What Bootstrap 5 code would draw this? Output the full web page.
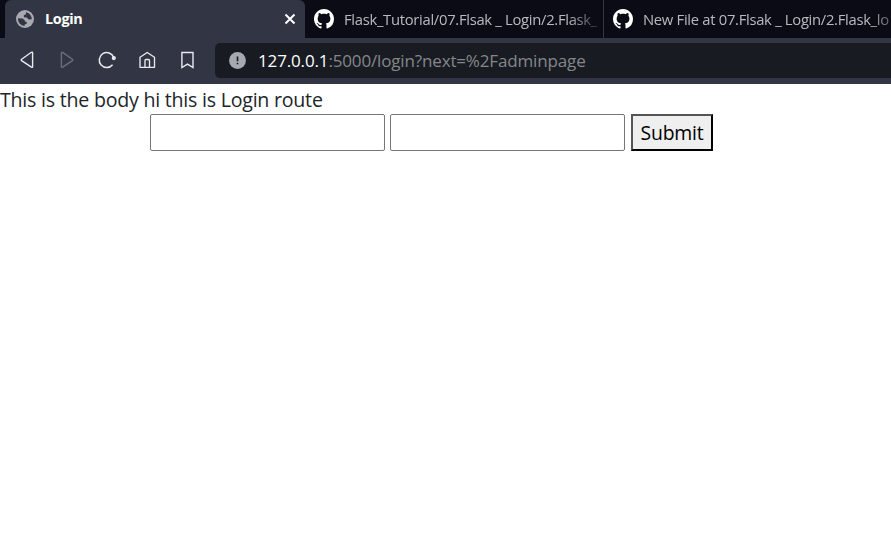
<!DOCTYPE html>
<html lang="en">
<head>
<meta charset="utf-8">
<title>Login</title>
<link href="https://cdn.jsdelivr.net/npm/bootstrap@5.3.0/dist/css/bootstrap.min.css" rel="stylesheet">
<style>
body{font-family:"Open Sans","Noto Sans",sans-serif;background:#fff;overflow:hidden;height:550px}
.tab-strip{height:38px;background:#0b0b16;padding-left:5px}
.tab-item{height:38px;font-size:14.8px;white-space:nowrap;color:#b9b9bd;overflow:hidden}
.tab-current{width:300px;background:#323644;color:#fff;font-weight:700;border-radius:6px 6px 0 0;padding:0 9px 0 11px;font-size:14.4px}
.tab-repo{width:299px;padding-left:9px;border-right:1px solid #35353f}
.tab-last{width:287px;padding-left:9px}
.tab-label{overflow:hidden;line-height:38px;letter-spacing:-.3px}
.tab-name{margin-left:11px}
.fade-a{width:253px;margin-left:10px;-webkit-mask-image:linear-gradient(to right,#000 224px,transparent 262px)}
.fade-b{width:249px;margin-left:10px;-webkit-mask-image:linear-gradient(to right,#000 226px,transparent 264px)}
.toolbar-row{height:46px;background:#323644;padding-left:17px;padding-bottom:2px}
.tool-icon{width:20px;height:20px;margin-right:20px}
.address-field{height:35px;background:#181b22;border-radius:5px 0 0 5px;margin-left:-2px;padding-left:14px;color:#85878a;font-size:17px}
.address-text{margin-left:12px;letter-spacing:-.15px;line-height:35px}
.page-text{font-size:19.6px;line-height:30px;color:#212529;height:30px;padding-top:1px;letter-spacing:-.23px}
.login-form{padding-left:150px}
.text-field{width:235px;height:37px;border:1px solid #767676;border-radius:2px;margin-right:5px;font-size:20px}
.submit-button{width:82px;height:37px;margin-left:1px;padding:1px 0 0;border:2px solid;border-color:#555 #000 #000 #555;background:#efefef;color:#000;font-size:19.4px;line-height:32px;letter-spacing:-.2px}
</style>
<script src="https://cdn.jsdelivr.net/npm/bootstrap@5.3.0/dist/js/bootstrap.bundle.min.js"></script>
</head>
<body>
<svg class="d-none">
<symbol id="github" viewBox="0 0 16 16"><path fill="#fff" d="M8 0C3.58 0 0 3.58 0 8c0 3.54 2.29 6.53 5.47 7.59.4.07.55-.17.55-.38 0-.19-.01-.82-.01-1.49-2.01.37-2.53-.49-2.69-.94-.09-.23-.48-.94-.82-1.13-.28-.15-.68-.52-.01-.53.63-.01 1.08.58 1.23.82.72 1.21 1.87.87 2.33.66.07-.52.28-.87.51-1.07-1.78-.2-3.64-.89-3.64-3.95 0-.87.31-1.59.82-2.15-.08-.2-.36-1.02.08-2.12 0 0 .67-.21 2.2.82.64-.18 1.32-.27 2-.27s1.36.09 2 .27c1.53-1.04 2.2-.82 2.2-.82.44 1.1.16 1.92.08 2.12.51.56.82 1.27.82 2.15 0 3.07-1.87 3.75-3.65 3.95.29.25.54.73.54 1.48 0 1.07-.01 1.93-.01 2.2 0 .21.15.46.55.38A8.01 8.01 0 0 0 16 8c0-4.42-3.58-8-8-8"/></symbol>
</svg>
<header>
<div class="tab-strip d-flex">
<div class="tab-item tab-current d-flex align-items-center flex-shrink-0">
<svg width="18" height="18" viewBox="0 0 18 18"><circle cx="9" cy="9" r="9" fill="#a7aab0"/><path fill="#323644" d="M10 2.2 9.8 4.3 7.8 5.2 7.9 7.2 10.6 7.4 12.7 9.5 15.8 9.3A7 7 0 0 0 10 2.2M2 8.2 6.6 8.5 8.8 10.2 8.7 11.3 10.7 12 10.7 13.7 8.7 14.5 8.5 16A7 7 0 0 1 2 8.2"/></svg>
<span class="tab-label tab-name flex-grow-1">Login</span>
<svg width="12" height="12" viewBox="0 0 12 12"><path d="M1.5 1.5 10.5 10.5M10.5 1.5 1.5 10.5" stroke="#fff" stroke-width="2"/></svg>
</div>
<div class="tab-item tab-repo d-flex align-items-center flex-shrink-0"><svg class="flex-shrink-0" width="20" height="20"><use href="#github"/></svg><span class="tab-label fade-a">Flask_Tutorial/07.Flsak _ Login/2.Flask_</span></div>
<div class="tab-item tab-last d-flex align-items-center flex-shrink-0"><svg class="flex-shrink-0" width="20" height="20"><use href="#github"/></svg><span class="tab-label fade-b">New File at 07.Flsak _ Login/2.Flask_lo</span></div>
</div>
<div class="toolbar-row d-flex align-items-center">
<svg class="tool-icon flex-shrink-0" viewBox="0 0 20 20" fill="none" stroke="#e9eaf0" stroke-width="1.4" stroke-linejoin="round"><path d="M14.4 2.3Q15.6 1.8 15.6 3V16.5Q15.6 17.8 14.4 17.2L4.6 10.6Q3.8 10 4.6 9.3Z"/></svg>
<svg class="tool-icon flex-shrink-0" viewBox="0 0 20 20" fill="none" stroke="#6b6e7a" stroke-width="1.4" stroke-linejoin="round"><path d="M5.6 2.4Q4.4 1.9 4.4 3.1V16.4Q4.4 17.7 5.6 17.1L15.4 10.6Q16.2 10 15.4 9.3Z"/></svg>
<svg class="tool-icon flex-shrink-0" viewBox="0 0 20 20" fill="none" stroke="#e9eaf0" stroke-width="1.5"><path d="M16.7 7.2A7.5 7.5 0 1 0 15.6 14.8"/><circle cx="16.8" cy="8.1" r="2.1" fill="#e9eaf0" stroke="none"/></svg>
<svg class="tool-icon flex-shrink-0" viewBox="0 0 20 20" fill="none" stroke="#e9eaf0" stroke-width="1.35" stroke-linejoin="round"><path d="M3 7.3 10.2 2.5 17.5 7.3V17.3H3ZM8 17V10.4Q8 9.5 9 9.5H11.5Q12.5 9.5 12.5 10.4V17"/></svg>
<svg class="tool-icon flex-shrink-0" viewBox="0 0 20 20" fill="none" stroke="#e9eaf0" stroke-width="1.4"><path d="M4.9 2.5H16V17.5L10.5 14.1 4.9 17.5Z"/></svg>
<div class="address-field d-flex align-items-center flex-grow-1">
<svg width="17" height="17" viewBox="0 0 17 17"><circle cx="8.5" cy="8.5" r="8.4" fill="#a6a9b2"/><path d="M8.5 4.5V9.3M8.5 10.7V12.3" stroke="#181b22" stroke-width="1.6"/></svg>
<span class="address-text"><span class="text-white">127.0.0.1</span>:5000/login?next=%2Fadminpage</span>
</div>
</div>
</header>
<main>
<div class="page-text">This is the body hi this is Login route</div>
<form class="login-form d-flex">
<input class="text-field" type="text" aria-label="Username"><input class="text-field" type="password" aria-label="Password"><button class="submit-button" type="button">Submit</button>
</form>
</main>
</body>
</html>
